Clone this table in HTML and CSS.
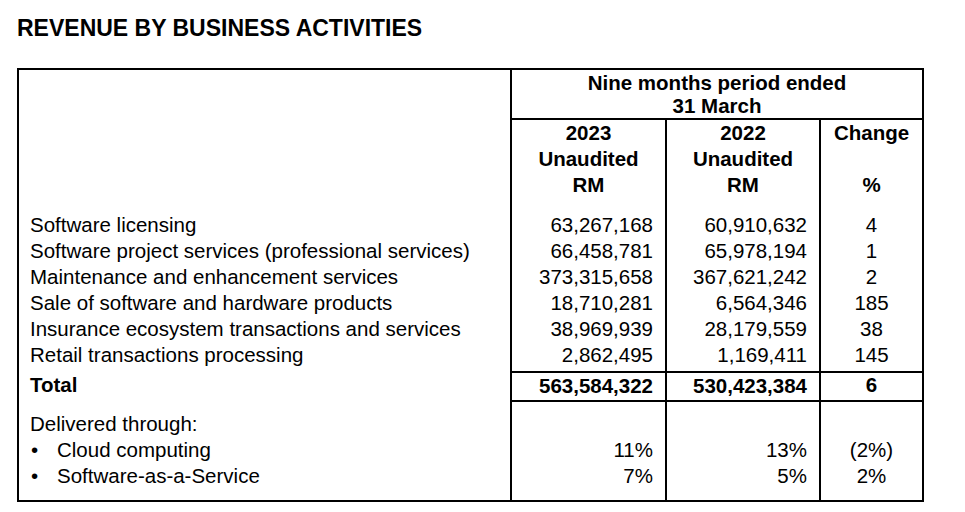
FILE: index.html
```html
<!DOCTYPE html>
<html>
<head>
<meta charset="utf-8">
<link rel="stylesheet" href="styles.css">
</head>
<body>
<div class="page">
  <h1 class="title">REVENUE BY BUSINESS ACTIVITIES</h1>
  <table class="rev">
    <colgroup>
      <col class="c-label">
      <col class="c-a">
      <col class="c-b">
      <col class="c-chg">
    </colgroup>
    <thead>
      <tr>
        <td class="blank" rowspan="2"></td>
        <th class="period" colspan="3">Nine months period ended<br>31 March</th>
      </tr>
      <tr class="years">
        <th>2023<br>Unaudited<br>RM</th>
        <th>2022<br>Unaudited<br>RM</th>
        <th>Change<br>&nbsp;<br>%</th>
      </tr>
    </thead>
    <tbody>
      <tr>
        <td class="lbl">Software licensing</td>
        <td class="num">63,267,168</td>
        <td class="num">60,910,632</td>
        <td class="chg">4</td>
      </tr>
      <tr>
        <td class="lbl">Software project services (professional services)</td>
        <td class="num">66,458,781</td>
        <td class="num">65,978,194</td>
        <td class="chg">1</td>
      </tr>
      <tr>
        <td class="lbl">Maintenance and enhancement services</td>
        <td class="num">373,315,658</td>
        <td class="num">367,621,242</td>
        <td class="chg">2</td>
      </tr>
      <tr>
        <td class="lbl">Sale of software and hardware products</td>
        <td class="num">18,710,281</td>
        <td class="num">6,564,346</td>
        <td class="chg">185</td>
      </tr>
      <tr>
        <td class="lbl">Insurance ecosystem transactions and services</td>
        <td class="num">38,969,939</td>
        <td class="num">28,179,559</td>
        <td class="chg">38</td>
      </tr>
      <tr class="last">
        <td class="lbl">Retail transactions processing</td>
        <td class="num">2,862,495</td>
        <td class="num">1,169,411</td>
        <td class="chg">145</td>
      </tr>
      <tr class="total">
        <td class="lbl">Total</td>
        <td class="num">563,584,322</td>
        <td class="num">530,423,384</td>
        <td class="chg">6</td>
      </tr>
      <tr class="del-first">
        <td class="lbl">Delivered through:</td>
        <td class="num"></td>
        <td class="num"></td>
        <td class="chg"></td>
      </tr>
      <tr>
        <td class="lbl"><span class="bullet">&bull;</span>Cloud computing</td>
        <td class="num">11%</td>
        <td class="num">13%</td>
        <td class="chg">(2%)</td>
      </tr>
      <tr class="del-last">
        <td class="lbl"><span class="bullet">&bull;</span>Software-as-a-Service</td>
        <td class="num">7%</td>
        <td class="num">5%</td>
        <td class="chg">2%</td>
      </tr>
    </tbody>
  </table>
</div>
</body>
</html>
```

FILE: styles.css
```css
html, body {
  margin: 0;
  padding: 0;
  background: #fff;
}

body {
  font-family: "Liberation Sans", Arial, sans-serif;
  color: #000;
}

.page {
  padding: 15px 0 0 17px;
}

.title {
  margin: 0 0 26px 0;
  font-size: 23px;
  line-height: 27px;
  font-weight: bold;
}

.rev {
  border-collapse: collapse;
  table-layout: fixed;
  width: 907px;
  border: 2px solid #000;
  font-size: 20.5px;
}

.c-label { width: 493px; }
.c-a { width: 155px; }
.c-b { width: 154px; }
.c-chg { width: 103px; }

.rev th,
.rev td {
  padding: 0;
  vertical-align: top;
  line-height: 26px;
}

.rev th {
  font-weight: bold;
  text-align: center;
}

.rev th.period {
  line-height: 23px;
  padding: 1px 0 1px 0;
  border-left: 2px solid #000;
  border-bottom: 2px solid #000;
}

.rev .years th {
  border-left: 2px solid #000;
  padding-bottom: 14px;
}

.rev td.num,
.rev td.chg {
  border-left: 2px solid #000;
}

.rev td.lbl {
  padding-left: 11px;
  white-space: nowrap;
}

.rev td.num {
  text-align: right;
  padding-right: 12px;
}

.rev td.chg {
  text-align: center;
}

.rev tr.last td {
  padding-bottom: 3px;
}

.rev tr.total td {
  font-weight: bold;
  padding-bottom: 1px;
}

.rev tr.total td.num,
.rev tr.total td.chg {
  border-top: 2px solid #000;
  border-bottom: 2px solid #000;
}

.rev tr.total td.chg {
  padding-bottom: 4px;
  line-height: 23px;
}

.rev tr.del-first td {
  padding-top: 10px;
}

.rev tr.del-last td {
  padding-bottom: 11px;
}

.bullet {
  display: inline-block;
  width: 27px;
  padding-left: 1px;
  box-sizing: border-box;
}
```
